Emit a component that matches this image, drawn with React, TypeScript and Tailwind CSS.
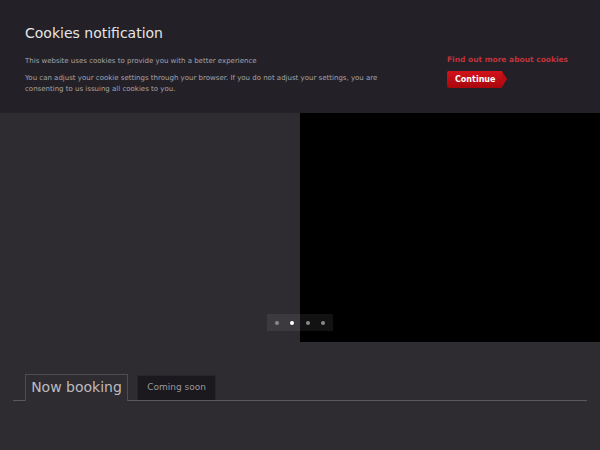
import React from "react";

export default function App() {
  return (
    <div className="w-[600px] h-[450px] overflow-hidden bg-[#2e2b31] relative" style={{ fontFamily: '"DejaVu Sans", Verdana, sans-serif' }}>
      <div className="h-[113px] bg-[#232127] flex px-[25px] pt-[24px]">
        <div className="w-[410px]">
          <div className="text-[14px] leading-[18px] text-[#e6e6e6]">Cookies notification</div>
          <div className="mt-[14px] text-[7px] leading-[11px] text-[#a5a3a8]">This website uses cookies to provide you with a better experience</div>
          <div className="mt-[6px] text-[7px] leading-[11px] text-[#a5a3a8] w-[370px]">You can adjust your cookie settings through your browser. If you do not adjust your settings, you are consenting to us issuing all cookies to you.</div>
        </div>
        <div className="ml-[12px] pt-[31px]">
          <div className="text-[7.5px] leading-[10px] font-bold text-[#c2323c] whitespace-nowrap">Find out more about cookies</div>
          <div className="mt-[6px] flex items-stretch h-[17px]">
            <div className="bg-gradient-to-b from-[#d4121b] to-[#a8070d] text-white text-[8px] font-bold flex items-center pl-[8px] pr-[7px] rounded-l-[2px]">Continue</div>
            <div className="w-0 h-0 border-t-[8.5px] border-b-[8.5px] border-l-[5px] border-t-transparent border-b-transparent border-l-[#bb0c13]"></div>
          </div>
        </div>
      </div>
      <div className="flex h-[229px]">
        <div className="w-[300px]"></div>
        <div className="w-[300px] bg-black"></div>
      </div>
      <div className="absolute left-[267px] top-[314px] w-[66px] h-[17px] bg-[rgba(255,255,255,0.07)] flex items-center justify-around px-[2px]">
        <span className="w-[4px] h-[4px] rounded-full bg-[#8a888d]"></span>
        <span className="w-[4px] h-[4px] rounded-full bg-white"></span>
        <span className="w-[4px] h-[4px] rounded-full bg-[#8a888d]"></span>
        <span className="w-[4px] h-[4px] rounded-full bg-[#8a888d]"></span>
      </div>
      <div className="mx-[13px] mt-[32px] flex items-end border-b border-[#5a575d] h-[27px]">
        <div className="ml-[12px] h-[27px] w-[103px] border border-b-0 border-[#4e4b52] bg-[#2e2b31] text-[14px] text-[#bdbbc0] flex items-center justify-center mb-[-1px] pb-[1px]">Now booking</div>
        <div className="ml-[9px] h-[25px] w-[79px] bg-[#1b191d] border border-b-0 border-[#28262b] text-[9px] text-[#9a989d] flex items-center justify-center">Coming soon</div>
      </div>
    </div>
  );
}
